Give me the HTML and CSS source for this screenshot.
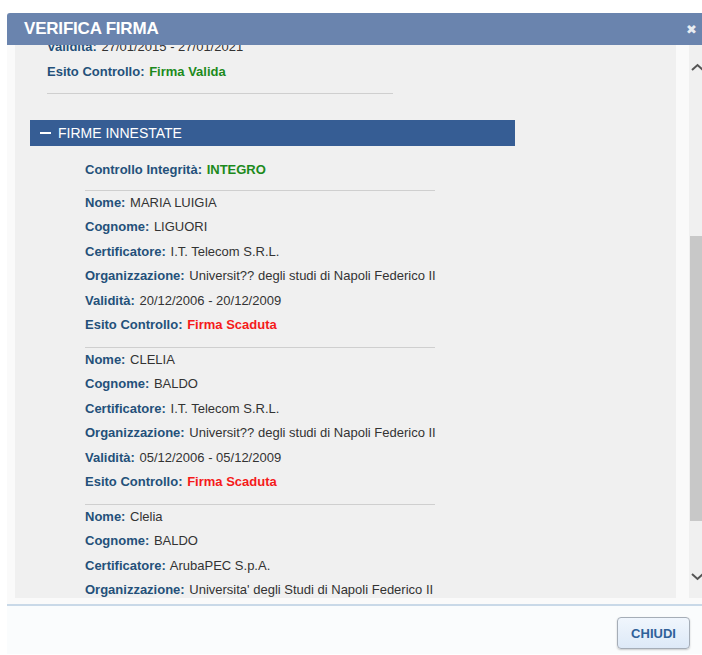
FILE: index.html
```html
<!DOCTYPE html>
<html lang="it">
<head>
<meta charset="utf-8">
<title>Verifica Firma</title>
<link rel="stylesheet" href="styles.css">
</head>
<body>
<div class="dialog">
  <div class="titlebar">
    <span class="title">VERIFICA FIRMA</span>
    <span class="close">&#x2716;</span>
  </div>
  <div class="dialog-body">
    <div class="panel">
      <div class="scroll">
        <div class="outer">
          <div class="row"><b class="lbl">Validità:</b> 27/01/2015 - 27/01/2021</div>
          <div class="row"><b class="lbl">Esito Controllo:</b> <b class="ok">Firma Valida</b></div>
        </div>
        <hr class="sep-outer">
        <div class="section-head"><span class="minus"></span>FIRME INNESTATE</div>
        <div class="inner">
          <div class="row integrity"><b class="lbl">Controllo Integrità:</b> <b class="ok">INTEGRO</b></div>
          <div class="sig">
            <div class="row"><b class="lbl">Nome:</b> MARIA LUIGIA</div>
            <div class="row"><b class="lbl">Cognome:</b> LIGUORI</div>
            <div class="row"><b class="lbl">Certificatore:</b> I.T. Telecom S.R.L.</div>
            <div class="row"><b class="lbl">Organizzazione:</b> Universit?? degli studi di Napoli Federico II</div>
            <div class="row"><b class="lbl">Validità:</b> 20/12/2006 - 20/12/2009</div>
            <div class="row"><b class="lbl">Esito Controllo:</b> <b class="ko">Firma Scaduta</b></div>
          </div>
          <div class="sig">
            <div class="row"><b class="lbl">Nome:</b> CLELIA</div>
            <div class="row"><b class="lbl">Cognome:</b> BALDO</div>
            <div class="row"><b class="lbl">Certificatore:</b> I.T. Telecom S.R.L.</div>
            <div class="row"><b class="lbl">Organizzazione:</b> Universit?? degli studi di Napoli Federico II</div>
            <div class="row"><b class="lbl">Validità:</b> 05/12/2006 - 05/12/2009</div>
            <div class="row"><b class="lbl">Esito Controllo:</b> <b class="ko">Firma Scaduta</b></div>
          </div>
          <div class="sig">
            <div class="row"><b class="lbl">Nome:</b> Clelia</div>
            <div class="row"><b class="lbl">Cognome:</b> BALDO</div>
            <div class="row"><b class="lbl">Certificatore:</b> ArubaPEC S.p.A.</div>
            <div class="row"><b class="lbl">Organizzazione:</b> Universita' degli Studi di Napoli Federico II</div>
            <div class="row"><b class="lbl">Validità:</b> 05/12/2006 - 05/12/2009</div>
            <div class="row"><b class="lbl">Esito Controllo:</b> <b class="ko">Firma Scaduta</b></div>
          </div>
        </div>
      </div>
    </div>
    <div class="scrollbar">
      <svg class="arrow" width="17" height="12" viewBox="0 0 17 12"><path d="M3 8 L8.5 3 L14 8" fill="none" stroke="#555" stroke-width="2"/></svg>
      <div class="track"><div class="thumb"></div></div>
      <svg class="arrow" width="17" height="12" viewBox="0 0 17 12"><path d="M3 4 L8.5 9 L14 4" fill="none" stroke="#555" stroke-width="2"/></svg>
    </div>
  </div>
  <div class="footer">
    <button class="btn">CHIUDI</button>
  </div>
</div>
</body>
</html>
```
FILE: styles.css
```css
html, body {
  margin: 0;
  padding: 0;
  overflow: hidden;
  background: #ffffff;
}

body {
  font-family: "Liberation Sans", Arial, sans-serif;
  font-size: 13px;
  color: #333333;
}

.dialog {
  margin: 13px 0 0 7px;
  width: 712px;
  background: #fafafa;
}

.titlebar {
  height: 32px;
  background: #6a84ae;
  border-radius: 3px 3px 0 0;
  display: flex;
  align-items: center;
  justify-content: space-between;
  padding: 0 22px 0 17px;
  color: #ffffff;
}

.title {
  font-size: 17px;
  font-weight: bold;
  letter-spacing: -0.2px;
}

.close {
  font-size: 13px;
  color: #e8ecf2;
}

.dialog-body {
  display: flex;
  height: 553px;
  padding: 0 0 6px 8px;
}

.panel {
  width: 661px;
  background: #f0f0f0;
  overflow: hidden;
}

.scroll {
  margin-top: -10px;
}

.row {
  line-height: 24.5px;
  height: 24.5px;
  white-space: nowrap;
}

.lbl {
  color: #24507a;
  margin-right: 1px;
}

.ok {
  color: #1c8a1c;
}

.ko {
  color: #f51a1a;
}

.outer {
  padding-left: 32px;
}

.sep-outer {
  margin: 9px 0 0 32px;
  width: 346px;
  border: 0;
  border-top: 1px solid #cfcfcf;
  height: 0;
}

.section-head {
  margin: 26px 0 0 15px;
  width: 485px;
  height: 26px;
  background: #365d94;
  color: #ffffff;
  font-size: 14px;
  display: flex;
  align-items: center;
  padding-left: 10px;
  box-sizing: border-box;
}

.minus {
  display: inline-block;
  width: 11px;
  height: 2px;
  background: #ffffff;
  margin-right: 7px;
}

.inner {
  padding: 12px 0 0 70px;
}

.integrity {
  margin-bottom: 7px;
}

.sig {
  width: 350px;
  border-top: 1px solid #cfcfcf;
  padding-bottom: 9px;
}

.scrollbar {
  margin-left: 13px;
  width: 17px;
  background: #f0f0f0;
  display: flex;
  flex-direction: column;
}

.arrow {
  display: block;
  margin: 17px 0 0 0;
}

.arrow + .track + .arrow {
  margin: 0 0 16px 0;
}

.track {
  flex: 1;
  display: flex;
  flex-direction: column;
  padding-top: 162px;
  padding-bottom: 49px;
}

.thumb {
  flex: 1;
  margin-left: 1px;
  background: #c8c8c8;
}

.footer {
  border-top: 2px solid #c9d9e8;
  height: 50px;
  background: #fafcfd;
  display: flex;
  justify-content: flex-end;
  align-items: flex-start;
  padding: 11px 29px 0 0;
  box-sizing: border-box;
}

.btn {
  width: 73px;
  height: 32px;
  border: 1px solid #a5adb7;
  border-radius: 4px;
  background: linear-gradient(#f0f6fd, #dde9f7);
  box-shadow: 0 1px 2px rgba(0, 0, 0, 0.2);
  color: #2f6199;
  font-family: "Liberation Sans", Arial, sans-serif;
  font-weight: bold;
  font-size: 13px;
  padding: 0;
}
```
